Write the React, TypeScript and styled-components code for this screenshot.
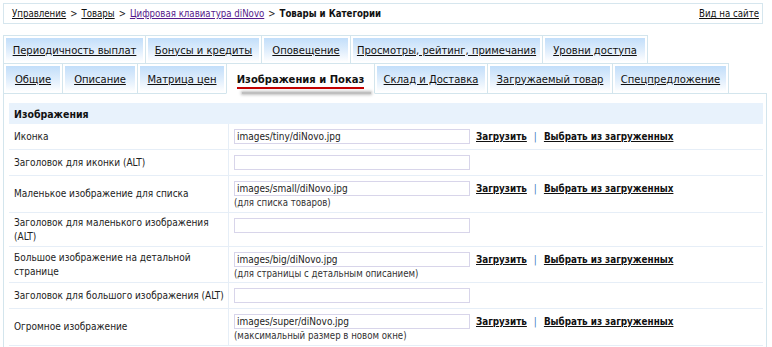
import React from "react";
import styled, { createGlobalStyle } from "styled-components";

const GlobalStyle = createGlobalStyle`
  body {
    margin: 0;
    background: #fff;
    font-family: "DejaVu Sans", Verdana, sans-serif;
    color: #222;
  }
`;

const Page = styled.div`
  padding: 3px 6px 0 3px;
  width: 764px;
`;

const Crumbs = styled.div`
  display: flex;
  justify-content: space-between;
  align-items: center;
  width: 747px;
  height: 19px;
  border: 1px solid #d6e6ee;
  padding: 0 3px 0 8px;
  box-sizing: content-box;
  font-size: 9.6px;
  font-family: "DejaVu Sans Condensed", "DejaVu Sans", sans-serif;
`;

const CrumbPath = styled.div`
  display: flex;
  align-items: center;
  gap: 4px;
`;

const CrumbLink = styled.a<{ $visited?: boolean }>`
  color: ${(p) => (p.$visited ? "#551a8b" : "#111")};
  text-decoration: underline;
`;

const CrumbCurrent = styled.b`
  color: #111;
`;

const Tabs = styled.div`
  margin-top: 11px;
`;

const TabRow = styled.div`
  display: flex;
  & + & {
    margin-top: -1px;
  }
`;

const Tab = styled.div<{ $w: number; $h: number; $active?: boolean }>`
  position: relative;
  width: ${(p) => p.$w}px;
  height: ${(p) => p.$h}px;
  box-sizing: border-box;
  border: 1px solid #d3e5ed;
  border-bottom-color: ${(p) => (p.$active ? "#fff" : "#d3e5ed")};
  padding: 2px 2px 1px 2px;
  background: #fff;
  z-index: ${(p) => (p.$active ? 2 : 1)};
  & + & {
    margin-left: -1px;
  }
`;

const TabFace = styled.div<{ $active?: boolean }>`
  height: 100%;
  display: flex;
  align-items: center;
  justify-content: center;
  background: ${(p) =>
    p.$active ? "#fff" : "linear-gradient(to bottom, #c2defa 0%, #deedfc 50%, #ffffff 100%)"};
  font-size: 10px;
`;

const TabLink = styled.a`
  color: #111;
  text-decoration: underline;
  white-space: nowrap;
`;

const ActiveLabel = styled.span`
  position: relative;
  font-weight: bold;
  color: #111;
  font-size: 10px;
  padding-bottom: 2px;
  border-bottom: 2px solid #c40000;
  margin-top: 5px;
  white-space: nowrap;
  &::after {
    content: "";
    position: absolute;
    left: 5px;
    right: -7px;
    bottom: -7px;
    height: 2px;
    background: rgba(0, 0, 0, 0.25);
    box-shadow: 0 0 3px 1px rgba(0, 0, 0, 0.25);
  }
`;

const Panel = styled.div`
  margin-top: -1px;
  border: 1px solid #d3e5ed;
  border-bottom: none;
  padding: 9px 3px 0 5px;
  height: 260px;
`;

const SectionHead = styled.div`
  background: #e8f2fc;
  height: 21px;
  display: flex;
  align-items: center;
  padding-left: 5px;
  font-family: "DejaVu Sans Condensed", "DejaVu Sans", sans-serif;
  font-size: 10.5px;
  font-weight: bold;
  color: #111;
`;

const Row = styled.div<{ $h: number }>`
  display: grid;
  grid-template-columns: 220px 1fr;
  height: ${(p) => p.$h}px;
  border-bottom: 1px solid #e6eef7;
  font-family: "DejaVu Sans Condensed", "DejaVu Sans", sans-serif;
  font-size: 10px;
`;

const Label = styled.div`
  display: flex;
  align-items: center;
  padding-left: 5px;
  border-right: 1px solid #e6eef7;
  line-height: 14px;
  color: #222;
  white-space: nowrap;
`;

const Value = styled.div`
  padding: 5px 0 0 5px;
`;

const Line = styled.div`
  display: flex;
  align-items: center;
  gap: 6px;
`;

const Field = styled.input`
  width: 236px;
  height: 15px;
  box-sizing: border-box;
  border: 1px solid #d8d5ea;
  padding: 0 2px;
  font-family: "DejaVu Sans Condensed", "DejaVu Sans", sans-serif;
  font-size: 10px;
  color: #222;
  outline: none;
`;

const Note = styled.div`
  margin-top: 1px;
  color: #333;
  font-size: 9.6px;
`;

const Action = styled.a`
  font-weight: bold;
  color: #111;
  text-decoration: underline;
  font-size: 9.8px;
`;

const Pipe = styled.span`
  color: #3d7cc0;
  margin: 0 1px;
`;

type Tb = { text: string; w: number; active?: boolean };

const topTabs: Tb[] = [
  { text: "Периодичность выплат", w: 143 },
  { text: "Бонусы и кредиты", w: 117 },
  { text: "Оповещение", w: 90 },
  { text: "Просмотры, рейтинг, примечания", w: 193 },
  { text: "Уровни доступа", w: 106 },
];

const mainTabs: Tb[] = [
  { text: "Общие", w: 60 },
  { text: "Описание", w: 76 },
  { text: "Матрица цен", w: 90 },
  { text: "Изображения и Показ", w: 149, active: true },
  { text: "Склад и Доставка", w: 114 },
  { text: "Загружаемый товар", w: 126 },
  { text: "Спецпредложение", w: 117 },
];

type Fld = {
  label: React.ReactNode;
  value: string;
  note?: string;
  upload?: boolean;
  h: number;
};

const fields: Fld[] = [
  { label: "Иконка", value: "images/tiny/diNovo.jpg", upload: true, h: 25 },
  { label: "Заголовок для иконки (ALT)", value: "", h: 25 },
  {
    label: "Маленькое изображение для списка",
    value: "images/small/diNovo.jpg",
    note: "(для списка товаров)",
    upload: true,
    h: 36,
  },
  {
    label: (
      <>
        Заголовок для маленького изображения
        <br />
        (ALT)
      </>
    ),
    value: "",
    h: 33,
  },
  {
    label: (
      <>
        Большое изображение на детальной
        <br />
        странице
      </>
    ),
    value: "images/big/diNovo.jpg",
    note: "(для страницы с детальным описанием)",
    upload: true,
    h: 35,
  },
  { label: "Заголовок для большого изображения (ALT)", value: "", h: 25 },
  {
    label: "Огромное изображение",
    value: "images/super/diNovo.jpg",
    note: "(максимальный размер в новом окне)",
    upload: true,
    h: 36,
  },
];

const renderTabs = (list: Tb[], h: number) =>
  list.map((t) => (
    <Tab key={t.text} $w={t.w} $h={h} $active={t.active}>
      <TabFace $active={t.active}>
        {t.active ? <ActiveLabel>{t.text}</ActiveLabel> : <TabLink>{t.text}</TabLink>}
      </TabFace>
    </Tab>
  ));

const App: React.FC = () => {
  return (
    <Page>
      <GlobalStyle />
      <Crumbs>
        <CrumbPath>
          <CrumbLink>Управление</CrumbLink>
          <span>&gt;</span>
          <CrumbLink>Товары</CrumbLink>
          <span>&gt;</span>
          <CrumbLink $visited>Цифровая клавиатура diNovo</CrumbLink>
          <span>&gt;</span>
          <CrumbCurrent>Товары и Категории</CrumbCurrent>
        </CrumbPath>
        <CrumbLink>Вид на сайте</CrumbLink>
      </Crumbs>

      <Tabs>
        <TabRow>{renderTabs(topTabs, 29)}</TabRow>
        <TabRow>{renderTabs(mainTabs, 31)}</TabRow>
      </Tabs>

      <Panel>
        <SectionHead>Изображения</SectionHead>
        {fields.map((f, i) => (
          <Row key={i} $h={f.h}>
            <Label>{f.label}</Label>
            <Value>
              <Line>
                <Field defaultValue={f.value} />
                {f.upload && (
                  <>
                    <Action>Загрузить</Action>
                    <Pipe>|</Pipe>
                    <Action>Выбрать из загруженных</Action>
                  </>
                )}
              </Line>
              {f.note && <Note>{f.note}</Note>}
            </Value>
          </Row>
        ))}
      </Panel>
    </Page>
  );
};

export default App;
